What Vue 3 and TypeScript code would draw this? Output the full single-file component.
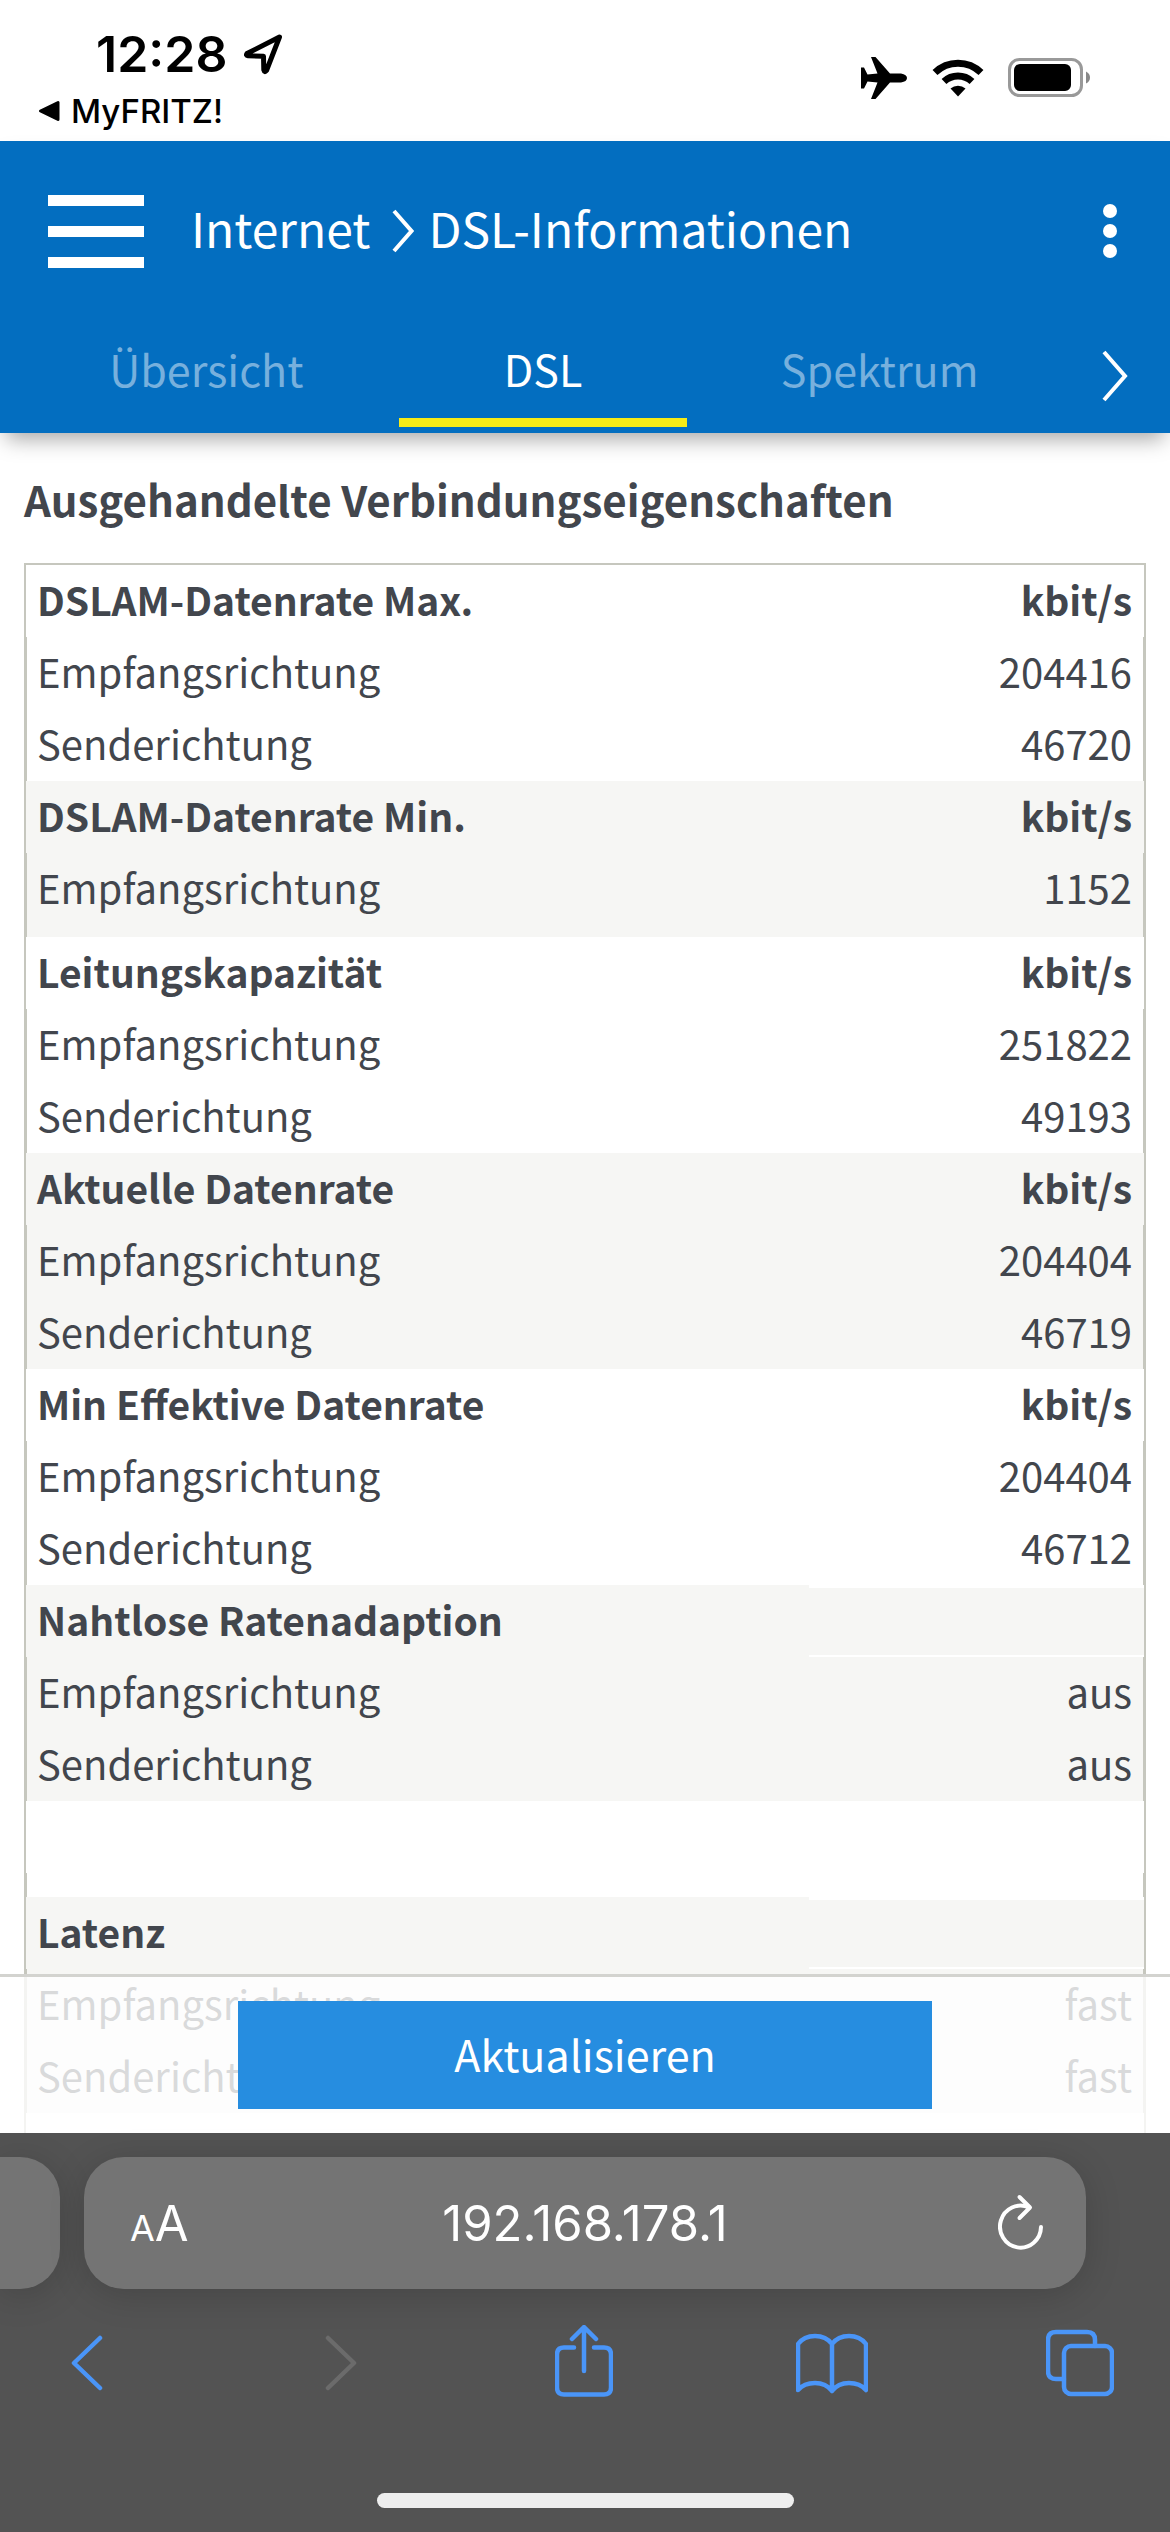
<script setup lang="ts">
interface Row {
  label: string
  value: string
}
interface Group {
  title: string
  unit: string
  rows: Row[]
  shaded: boolean
  spaced?: boolean
}

const tabs: { label: string; active: boolean }[] = [
  { label: 'Übersicht', active: false },
  { label: 'DSL', active: true },
  { label: 'Spektrum', active: false },
]

const rx = 'Empfangsrichtung'
const tx = 'Senderichtung'

const groups: Group[] = [
  { title: 'DSLAM-Datenrate Max.', unit: 'kbit/s', shaded: false, rows: [{ label: rx, value: '204416' }, { label: tx, value: '46720' }] },
  { title: 'DSLAM-Datenrate Min.', unit: 'kbit/s', shaded: true, spaced: true, rows: [{ label: rx, value: '1152' }] },
  { title: 'Leitungskapazität', unit: 'kbit/s', shaded: false, rows: [{ label: rx, value: '251822' }, { label: tx, value: '49193' }] },
  { title: 'Aktuelle Datenrate', unit: 'kbit/s', shaded: true, rows: [{ label: rx, value: '204404' }, { label: tx, value: '46719' }] },
  { title: 'Min Effektive Datenrate', unit: 'kbit/s', shaded: false, rows: [{ label: rx, value: '204404' }, { label: tx, value: '46712' }] },
  { title: 'Nahtlose Ratenadaption', unit: '', shaded: true, rows: [{ label: rx, value: 'aus' }, { label: tx, value: 'aus' }] },
  { title: '', unit: '', shaded: false, rows: [{ label: '', value: '' }] },
  { title: 'Latenz', unit: '', shaded: true, rows: [{ label: rx, value: 'fast' }, { label: tx, value: 'fast' }] },
  { title: '', unit: '', shaded: false, rows: [] },
]
</script>

<template>
  <div class="screen">
    <div class="status">
      <div class="status-left">
        <div class="clock">
          <span>12:28</span>
          <svg width="40" height="42" viewBox="0 0 40 42" aria-hidden="true">
            <path d="M36.500 4 L4 20.500 Q2.500 22.500 5 22.800 L20.500 23.300 L20.800 37 Q21.500 40 23.500 37.500 Z" fill="none" stroke="#000" stroke-width="5" stroke-linejoin="round" />
          </svg>
        </div>
        <a class="back-app" href="#">
          <svg width="22" height="22" viewBox="0 0 22 22" aria-hidden="true"><path d="M20 2.500V19.500L2.500 11Z" stroke="#000" stroke-width="3" stroke-linejoin="round" /></svg>
          <span>MyFRITZ!</span>
        </a>
      </div>
      <div class="status-right">
        <svg width="48" height="42" viewBox="0 0 48 42" aria-hidden="true">
          <path d="M11 0H15.500L30 16.500H41Q47 17.500 47 21Q47 24.500 41 25.500H30L15.500 42H11L17.500 25.500L7.500 24.500L4 31.500H1V10.500H4L7.500 17.500L17.500 16.500Z" />
        </svg>
        <svg width="52" height="38" viewBox="0 0 52 38" aria-hidden="true">
          <g fill="none" stroke="#000" stroke-width="7">
            <path d="M3 13.500A33 33 0 0 1 49 13.500" />
            <path d="M12 22.500A20.500 20.500 0 0 1 40 22.500" />
          </g>
          <path d="M18.500 29.500A11.500 11.500 0 0 1 33.500 29.500L26 37.500Z" />
        </svg>
        <svg width="84" height="40" viewBox="0 0 84 40" aria-hidden="true">
          <rect x="1.500" y="1.500" width="72" height="36" rx="10" fill="none" stroke="#999" stroke-width="3" />
          <rect x="6" y="6" width="57" height="27" rx="6" />
          <path d="M78 13.500Q82 15.500 82 19.500T78 25.500Z" fill="#888" />
        </svg>
      </div>
    </div>

    <header class="head">
      <div class="bar">
        <button class="burger" aria-label="Menü"><i></i><i></i><i></i></button>
        <h1 class="crumbs">
          <a href="#">Internet</a>
          <svg width="22" height="44" viewBox="0 0 22 44" aria-hidden="true"><path d="M2 2L19.500 22L2 42" fill="none" stroke="#fff" stroke-width="4" /></svg>
          <span>DSL-Informationen</span>
        </h1>
        <button class="more" aria-label="Mehr"><i></i><i></i><i></i></button>
      </div>
      <nav class="tabs">
        <a v-for="t in tabs" :key="t.label" href="#" class="tab" :class="{ active: t.active }">{{ t.label }}</a>
        <button class="next" aria-label="Weitere Reiter">
          <svg width="26" height="52" viewBox="0 0 26 52" aria-hidden="true"><path d="M2 2L23 26L2 50" fill="none" stroke="#fff" stroke-width="4" /></svg>
        </button>
      </nav>
    </header>

    <main class="page">
      <h2 class="title">Ausgehandelte Verbindungseigenschaften</h2>
      <table class="data">
        <tbody v-for="(g, i) in groups" :key="i" :class="{ shaded: g.shaded, spaced: g.spaced, blank: !g.title }">
          <tr>
            <th scope="rowgroup">{{ g.title }}</th>
            <th :class="{ empty: !g.unit }">{{ g.unit }}</th>
          </tr>
          <tr v-for="(r, j) in g.rows" :key="j">
            <td>{{ r.label }}</td>
            <td>{{ r.value }}</td>
          </tr>
        </tbody>
      </table>
      <div class="actions"><button class="refresh">Aktualisieren</button></div>
    </main>

    <footer class="safari">
      <div class="address-row">
        <div class="prev-page"></div>
        <div class="address">
          <button class="text-size" aria-label="Darstellung"><small>A</small>A</button>
          <input class="url" aria-label="Adresse" value="192.168.178.1" />
          <button class="reload" aria-label="Neu laden">
            <svg width="46" height="58" viewBox="0 0 46 58" fill="none" stroke="#fff" stroke-width="4" stroke-linecap="round" stroke-linejoin="round" aria-hidden="true">
              <path d="M43 33A20.500 21 0 1 1 31 13.500" />
              <path d="M21.500 3L32 13.500L21.500 24" />
            </svg>
          </button>
        </div>
        <div class="edge"></div>
      </div>
      <div class="tools">
        <button aria-label="Zurück">
          <svg width="32" height="74" viewBox="0 0 32 74"><path d="M29 13L3 38L29 63" /></svg>
        </button>
        <button class="off" aria-label="Vorwärts" disabled>
          <svg width="44" height="74" viewBox="-12 0 44 74"><path d="M3 13L29 38L3 63" /></svg>
        </button>
        <button aria-label="Teilen">
          <svg width="58" height="74" viewBox="0 0 58 74"><path d="M19 22.500H9Q2 22.500 2 29.500V62.500Q2 69.500 9 69.500H49Q56 69.500 56 62.500V29.500Q56 22.500 49 22.500H39M29 46V3M17 14L29 2L41 14" /></svg>
        </button>
        <button aria-label="Lesezeichen">
          <svg width="72" height="74" viewBox="0 0 72 74"><path d="M36 19Q30 11 19 11Q8 11 2 19V65Q8 58 19 58Q30 58 36 66Q42 58 53 58Q64 58 70 65V19Q64 11 53 11Q42 11 36 19V66" /></svg>
        </button>
        <button aria-label="Tabs">
          <svg width="68" height="74" viewBox="0 0 68 74"><path d="M18 54H10Q2 54 2 46V15Q2 7 10 7H41Q49 7 49 15V21" /><rect x="18" y="21" width="48" height="48" rx="7" /></svg>
        </button>
      </div>
      <div class="home"></div>
    </footer>
  </div>
</template>

<style>
body {
  margin: 0;
  background: #fff;
}
</style>

<style scoped>
.screen {
  display: flex;
  flex-direction: column;
  height: 100vh;
  overflow: hidden;
  font-family: 'Noto Sans CJK SC', 'Noto Sans', sans-serif;
  color: #42464d;
}
button {
  border: 0;
  padding: 0;
  margin: 0;
  background: none;
  color: inherit;
  font: inherit;
}
a {
  color: inherit;
  text-decoration: none;
}
svg {
  display: block;
  flex: none;
}

.status {
  display: flex;
  justify-content: space-between;
  height: 141px;
  flex: none;
  color: #000;
  font-family: Inter, 'Liberation Sans', sans-serif;
}
.status-left {
  padding: 24px 0 0 38px;
}
.clock {
  display: flex;
  align-items: center;
  gap: 16px;
  padding-left: 58px;
  height: 60px;
  font-size: 50px;
  font-weight: 600;
}
.back-app {
  display: flex;
  align-items: center;
  gap: 11px;
  height: 54px;
  font-size: 33px;
  font-weight: 500;
}
.status-right {
  display: flex;
  align-items: center;
  gap: 24px;
  height: 40px;
  padding: 58px 78px 0 0;
}

.head {
  position: relative;
  z-index: 2;
  flex: none;
  height: 292px;
  background: #036ec0;
  color: #fff;
  box-shadow: 0 12px 20px -6px rgba(0, 0, 0, 0.35);
}
.bar {
  display: flex;
  align-items: center;
  height: 180px;
  padding: 0 53px 0 48px;
}
.burger {
  display: grid;
  gap: 20px;
  width: 96px;
}
.burger i {
  height: 11px;
  background: #fff;
}
.crumbs {
  display: flex;
  align-items: center;
  flex: 1;
  margin: 0 0 0 47px;
  font-size: 48px;
  line-height: 64px;
  font-weight: 400;
}
.crumbs a,
.crumbs span {
  padding-bottom: 8px;
}
.crumbs svg {
  margin: 0 14px 0 22px;
}
.more {
  display: grid;
  gap: 6px;
  width: 14px;
}
.more i {
  height: 14px;
  border-radius: 50%;
  background: #fff;
}
.tabs {
  display: flex;
  align-items: flex-start;
  padding-left: 38px;
}
.tab {
  flex: 1;
  margin: 0 24px;
  height: 97px;
  line-height: 94px;
  font-size: 43px;
  text-align: center;
  color: #77b0dd;
}
.tab.active {
  color: #fff;
  border-bottom: 9px solid #f8ec17;
}
.next {
  width: 122px;
  height: 110px;
}
.next svg {
  margin-left: 54px;
}

.page {
  position: relative;
  flex: 1;
  min-height: 0;
  overflow: hidden;
  padding: 0 24px;
}
.title {
  margin: 34px 0 32px;
  font-size: 42px;
  line-height: 64px;
  font-weight: 600;
}
.data {
  width: 100%;
  box-sizing: border-box;
  border: 2px solid #c6c7be;
  border-spacing: 0;
  table-layout: fixed;
  font-size: 40px;
  line-height: 68px;
}
.data th,
.data td {
  box-sizing: border-box;
  height: 72px;
  padding: 0 12px 4px 11px;
  text-align: left;
  white-space: nowrap;
  vertical-align: top;
}
.data th {
  font-size: 39px;
  font-weight: 600;
}
.data th:first-child {
  width: 70%;
}
.data th:last-child,
.data td:last-child {
  text-align: right;
}
.data td:first-child {
  padding-left: 10px;
  border-left: 1px solid #c6c7be;
}
.data td:last-child {
  padding-right: 11px;
  border-right: 1px solid #c6c7be;
}
.shaded th,
.shaded td {
  background: #f6f6f4;
}
.shaded th.empty {
  border-top: 3px solid #fff;
  border-bottom: 2px solid #fff;
}
.spaced td {
  height: 84px;
}
.blank td {
  height: 24px;
}

.actions {
  position: absolute;
  left: 0;
  right: 0;
  bottom: 0;
  padding: 24px 238px;
  border-top: 3px solid #d3d3cf;
  background: rgba(255, 255, 255, 0.8);
}
.refresh {
  display: block;
  width: 100%;
  height: 108px;
  padding-bottom: 4px;
  background: #268de0;
  color: #fff;
  font-size: 43px;
}

.safari {
  position: relative;
  z-index: 2;
  flex: none;
  padding-top: 24px;
  background: #535353;
  color: #fff;
  font-family: Inter, 'Liberation Sans', sans-serif;
}
.address-row {
  display: flex;
  gap: 24px;
}
.prev-page,
.address {
  height: 132px;
  background: #747474;
  box-shadow: 0 6px 36px rgba(0, 0, 0, 0.16);
}
.prev-page {
  width: 60px;
  border-radius: 0 40px 40px 0;
}
.address {
  display: flex;
  align-items: center;
  justify-content: space-between;
  flex: 1;
  box-sizing: border-box;
  padding: 0 42px 0 46px;
  border-radius: 40px;
}
.edge {
  width: 60px;
}
.text-size {
  width: 62px;
  font-size: 49px;
  text-align: left;
  white-space: nowrap;
}
.text-size small {
  font-size: 36px;
}
.reload {
  width: 66px;
}
.reload svg {
  margin-left: auto;
}
.url {
  flex: 1;
  min-width: 0;
  padding: 0;
  border: 0;
  background: none;
  color: #fff;
  font: inherit;
  font-size: 49px;
  text-align: center;
}
.tools {
  display: flex;
  align-items: flex-start;
  justify-content: space-between;
  padding: 36px 54px 0 51px;
}
.tools button {
  display: flex;
  justify-content: center;
  width: 72px;
}
.tools svg {
  fill: none;
  stroke: #4a95f8;
  stroke-width: 4.500;
  stroke-linecap: round;
  stroke-linejoin: round;
}
.tools .off svg {
  stroke: #6b6b6b;
}
.home {
  width: 417px;
  height: 15px;
  margin: 94px auto 24px;
  border-radius: 8px;
  background: #eee;
}
</style>
